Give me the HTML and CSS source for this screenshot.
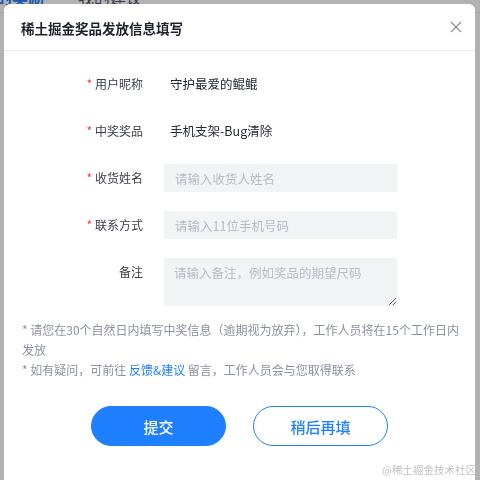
FILE: index.html
```html
<!DOCTYPE html>
<html lang="zh-CN">
<head>
<meta charset="utf-8">
<title>稀土掘金奖品发放信息填写</title>
<link rel="stylesheet" href="styles.css">
</head>
<body>
<div class="page">
  <div class="topnav">
    <span class="nav-item active">我的奖励</span>
    <span class="nav-item">我的建议</span>
  </div>
  <div class="page-line"></div>
</div>
<div class="mask"></div>
<div class="modal">
  <div class="modal-header">
    <div class="modal-title">稀土掘金奖品发放信息填写</div>
    <svg class="close" width="12" height="12" viewBox="0 0 12 12"><path d="M1 1L11 11M11 1L1 11" stroke="#8a8f99" stroke-width="1.2" fill="none"/></svg>
  </div>
  <div class="form">
    <div class="row">
      <div class="label"><span class="req">*</span>用户昵称</div>
      <div class="value">守护最爱的鲲鲲</div>
    </div>
    <div class="row">
      <div class="label"><span class="req">*</span>中奖奖品</div>
      <div class="value">手机支架-Bug清除</div>
    </div>
    <div class="row">
      <div class="label"><span class="req">*</span>收货姓名</div>
      <input class="input" type="text" placeholder="请输入收货人姓名">
    </div>
    <div class="row">
      <div class="label"><span class="req">*</span>联系方式</div>
      <input class="input" type="text" placeholder="请输入11位手机号码">
    </div>
    <div class="row row-area">
      <div class="label">备注</div>
      <textarea class="textarea" placeholder="请输入备注，例如奖品的期望尺码"></textarea>
    </div>
  </div>
  <div class="notes">
    <p>* 请您在30个自然日内填写中奖信息（逾期视为放弃），工作人员将在15个工作日内发放</p>
    <p>* 如有疑问，可前往 <a class="link">反馈&amp;建议</a> 留言，工作人员会与您取得联系</p>
  </div>
  <div class="actions">
    <button class="btn btn-primary">提交</button>
    <button class="btn btn-ghost">稍后再填</button>
  </div>
</div>
<div class="watermark">@稀土掘金技术社区</div>
</body>
</html>
```
FILE: styles.css
```css
html, body {
  margin: 0;
  padding: 0;
  width: 480px;
  height: 480px;
  overflow: hidden;
  background: #fff;
  font-family: "Noto Sans CJK SC", "Noto Sans", sans-serif;
}
.page {
  height: 480px;
  background: #fff;
}
.topnav {
  display: flex;
  gap: 34px;
  margin-top: -13px;
  margin-left: -20px;
  font-size: 16px;
  line-height: 20px;
  color: #515767;
}
.nav-item.active {
  color: #1e80ff;
  font-weight: 600;
}
.page-line {
  margin-top: 5px;
  border-top: 1px solid #e4e6eb;
}
.mask {
  position: fixed;
  inset: 0;
  background: rgba(0, 0, 0, 0.3);
}
.modal {
  position: absolute;
  left: 4px;
  top: 4px;
  width: 471px;
  height: 476px;
  overflow: hidden;
  background: #fff;
  border-radius: 6px 6px 0 0;
}
.modal-header {
  height: 46px;
  padding: 0 17px;
  display: flex;
  align-items: center;
  justify-content: space-between;
  border-bottom: 1px solid #e9eaed;
}
.modal-title {
  font-size: 13.5px;
  font-weight: 700;
  color: #1d2129;
  padding-top: 1px;
}
.close {
  margin-right: -4px;
}
.form {
  padding-top: 19px;
}
.row {
  display: flex;
  align-items: flex-start;
  height: 28px;
  margin-bottom: 19px;
}
.row-area {
  height: 48px;
  margin-bottom: 0;
}
.label {
  width: 139px;
  text-align: right;
  font-size: 12px;
  line-height: 28px;
  color: #3c4049;
  flex: none;
}
.req {
  color: #f53f3f;
  margin-right: 3px;
}
.value {
  margin-left: 27px;
  font-size: 12.5px;
  line-height: 28px;
  color: #252933;
}
.input, .textarea {
  margin-left: 21px;
  width: 233px;
  box-sizing: border-box;
  border: none;
  outline: none;
  background: #f2f3f5;
  border-radius: 2px;
  font-family: "Noto Sans CJK SC", "Noto Sans", sans-serif;
  font-size: 12.5px;
  color: #252933;
}
.input {
  height: 28px;
  padding: 0 11px;
}
.textarea {
  height: 48px;
  padding: 5px 10px;
  line-height: 20px;
  resize: vertical;
}
.input::placeholder, .textarea::placeholder {
  color: #b7bcc4;
}
.notes {
  margin-top: 14px;
  padding: 0 6px 0 18px;
  font-size: 12px;
  line-height: 20px;
  color: #8a919f;
}
.notes p {
  margin: 0;
}
.link {
  color: #1e80ff;
}
.actions {
  display: flex;
  justify-content: center;
  gap: 27px;
  margin-top: 26px;
}
.btn {
  width: 135px;
  height: 40px;
  border-radius: 20px;
  font-family: "Noto Sans CJK SC", "Noto Sans", sans-serif;
  font-size: 15px;
  font-weight: 500;
  cursor: pointer;
}
.btn-primary {
  background: #1e80ff;
  border: 1px solid #1e80ff;
  color: #fff;
}
.btn-ghost {
  background: #fff;
  border: 1px solid #1e80ff;
  color: #1e80ff;
}
.watermark {
  position: absolute;
  right: 4px;
  bottom: 2px;
  font-size: 10.5px;
  line-height: 16px;
  color: rgba(140, 140, 140, 0.55);
}
```
